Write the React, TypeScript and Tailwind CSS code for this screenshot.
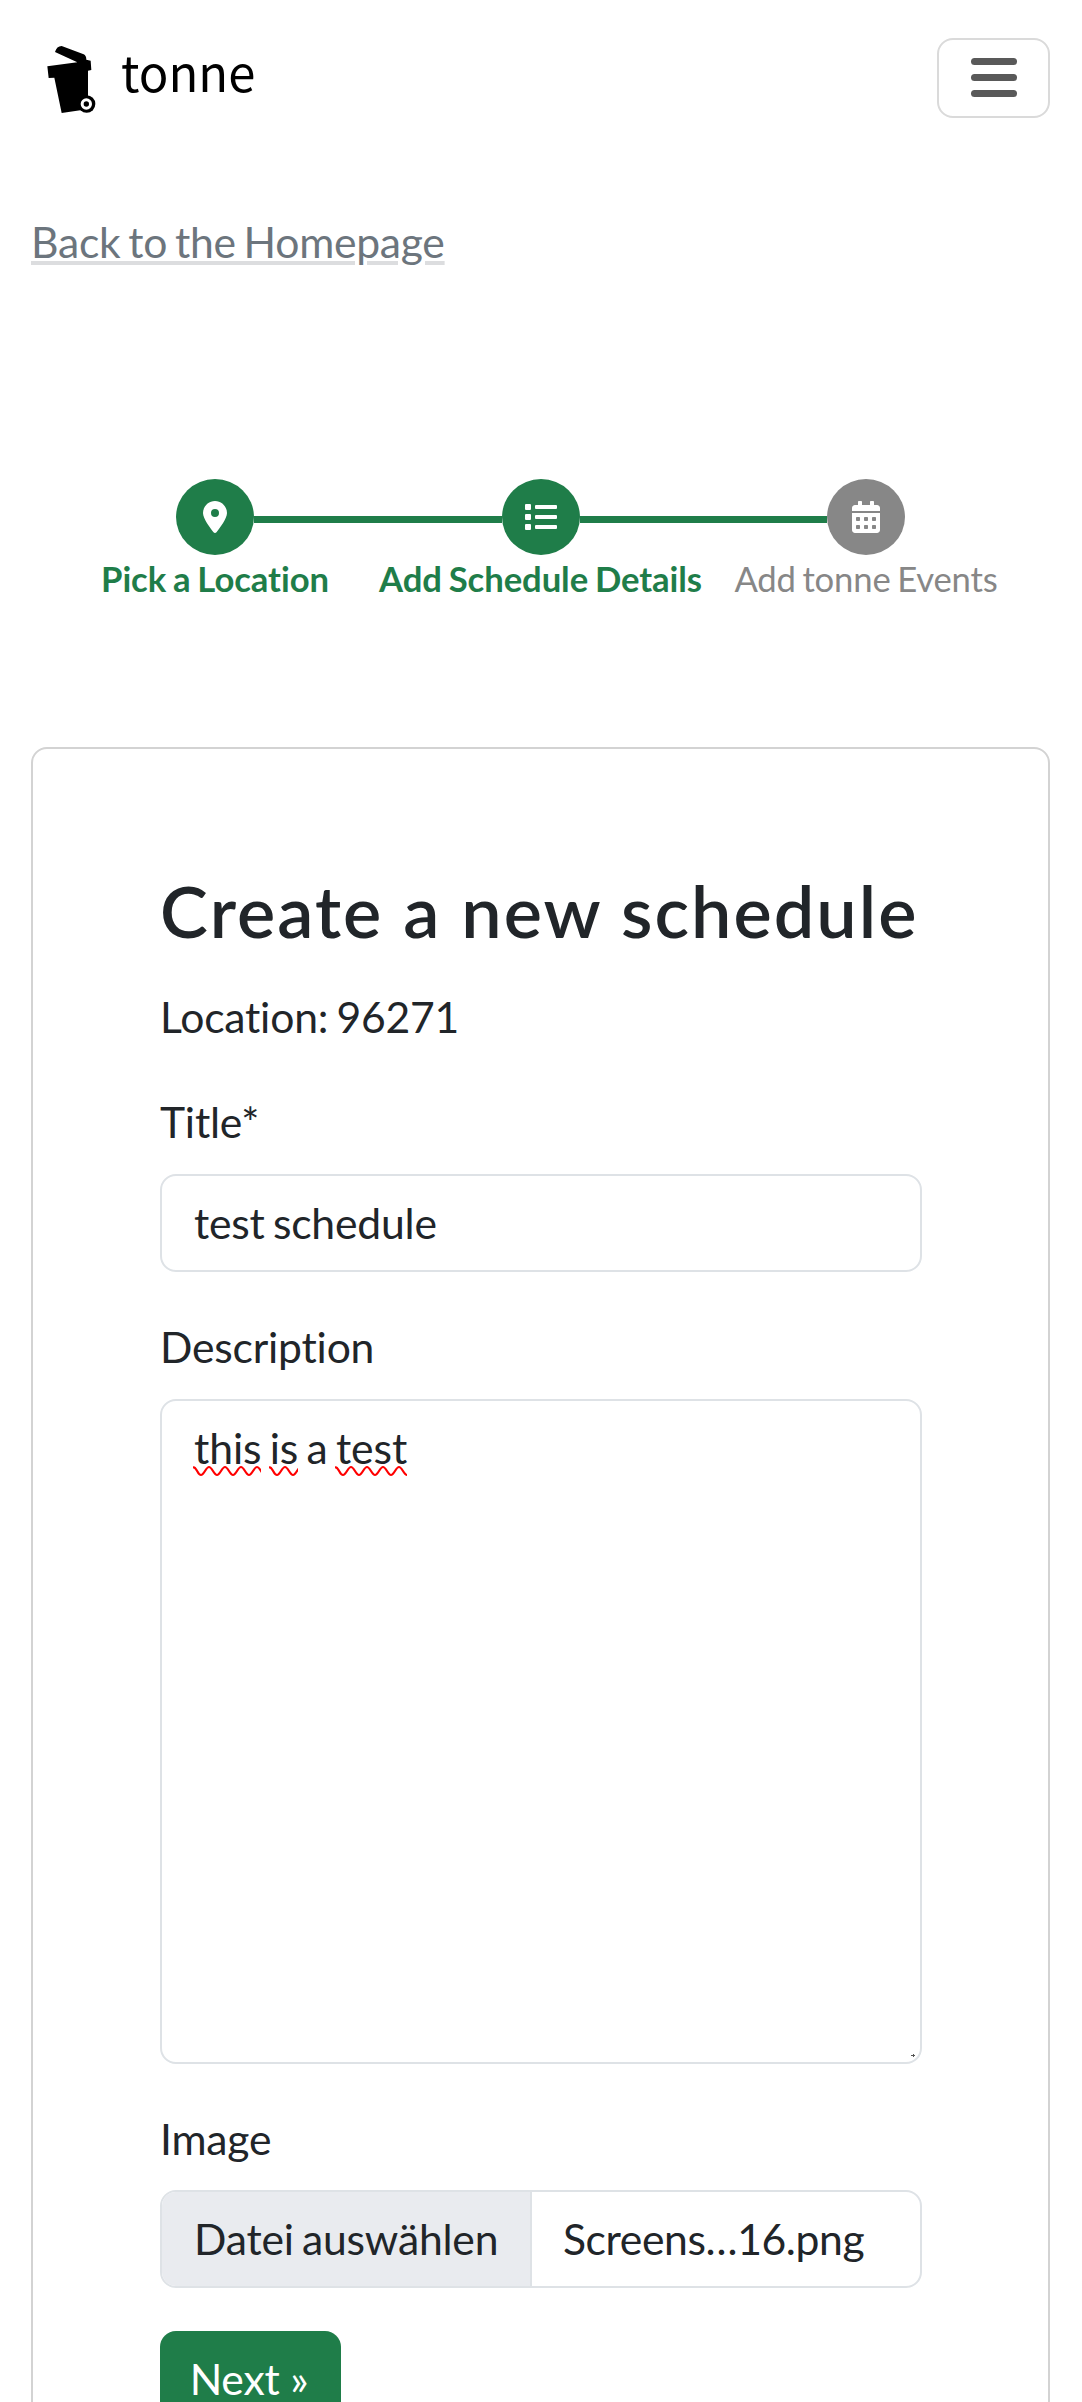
import { FaCalendarAlt, FaList } from "react-icons/fa";
import { FaLocationDot } from "react-icons/fa6";

function BinLogo() {
  return (
    <svg className="h-[69px] w-[51px]" viewBox="0 0 153 207" fill="#000">
      <path d="M27 21 Q32 3 47 3 L113 28 Q121 32 121 44 L134 47 L136 75 L126 77 L126 154 L108 195 L47 204 L25 98 L8 99 L4 64 L94 52 Z" />
      <circle cx="122" cy="177" r="26" />
      <circle cx="121" cy="177" r="12.5" fill="none" stroke="#fff" strokeWidth="9" />
    </svg>
  );
}

function Squiggle({ word, width }: { word: string; width: number }) {
  return (
    <span className="relative inline-block">
      {word}
      <svg
        className="absolute -left-px top-[49px] h-[14px] overflow-hidden"
        style={{ width }}
        fill="none"
        stroke="#f00"
        strokeWidth="2.2"
      >
        <path d="M0 2 L2 3 C5 6 5 10 8 10 C11 10 13 2 16 2 C19 2 21 10 24 10 C27 10 29 2 32 2 C35 2 37 10 40 10 C43 10 45 2 48 2 C51 2 53 10 56 10 C59 10 61 2 64 2 C67 2 69 10 72 10" />
      </svg>
    </span>
  );
}

type StepProps = {
  label: string;
  icon: React.ReactNode;
  first?: boolean;
  last?: boolean;
  muted?: boolean;
};

function Step({ label, icon, first, last, muted }: StepProps) {
  return (
    <li className="flex w-[325.5px] flex-col items-center">
      <div className="flex w-full items-center">
        <span className={first ? "h-[7px] flex-1" : "mt-[5px] h-[7px] flex-1 bg-[#1f7d49]"} />
        <span
          className={
            muted
              ? "flex h-[76px] w-[78px] items-center justify-center rounded-[50%] bg-[#878787] text-[32px] text-white"
              : "flex h-[76px] w-[78px] items-center justify-center rounded-[50%] bg-[#1f7d49] text-[32px] text-white"
          }
        >
          {icon}
        </span>
        <span className={last ? "h-[7px] flex-1" : "mt-[5px] h-[7px] flex-1 bg-[#1f7d49]"} />
      </div>
      <span
        className={
          muted
            ? "-mt-[2px] whitespace-nowrap text-[34.67px] leading-[52px] tracking-[-0.18px] [word-spacing:-2px] text-[#878787]"
            : "-mt-[2px] whitespace-nowrap text-[34.67px] font-bold leading-[52px] tracking-[-0.08px] [word-spacing:-1.5px] text-[#1f7d49]"
        }
      >
        {label}
      </span>
    </li>
  );
}

export default function App() {
  return (
    <div className="h-[2402px] overflow-hidden bg-white font-['Lato',sans-serif] text-[42.67px] leading-[64px] tracking-[-0.2px] text-[#212529] [font-variant-ligatures:none] [word-spacing:-2.5px]">
      <header className="flex h-[156px] items-start justify-between pl-[46px] pr-8 pt-[37px]">
        <div className="flex items-start pt-2">
          <BinLogo />
          <span className="ml-6 -mt-[4px] font-['Noto_Sans_CJK_SC',sans-serif] text-[49px] leading-[60px] tracking-normal text-black">
            tonne
          </span>
        </div>
        <button
          aria-label="Menu"
          className="mt-[0.5px] flex h-[80px] w-[113px] flex-col items-center justify-center gap-[9px] rounded-2xl border-2 border-[#dadada]"
        >
          <span className="h-[7px] w-[46px] rounded-full bg-[#595959]" />
          <span className="h-[7px] w-[46px] rounded-full bg-[#595959]" />
          <span className="h-[7px] w-[46px] rounded-full bg-[#595959]" />
        </button>
      </header>

      <main className="px-[31px]">
        <a className="mt-[54px] block w-fit tracking-[-0.27px] underline decoration-[#dcdddf] decoration-4 underline-offset-[3px] text-[#6c757d] [word-spacing:-2.8px]">
          Back to the Homepage
        </a>

        <ol className="mt-[205px] flex justify-center pr-px">
          <Step label="Pick a Location" icon={<FaLocationDot />} first />
          <Step label="Add Schedule Details" icon={<FaList />} />
          <Step label="Add tonne Events" icon={<FaCalendarAlt />} last muted />
        </ol>

        <section className="mt-[142px] h-[1800px] w-[1019px] rounded-2xl border-2 border-[#d3d3d3] px-[127px] pt-[113px]">
          <h1 className="h-[96px] whitespace-nowrap text-[72px] font-semibold leading-[96px] tracking-[2px] [word-spacing:0px]">
            Create a new schedule
          </h1>
          <p className="mt-[27px]">Location: 96271</p>

          <label className="mt-[41px] block">Title*</label>
          <div className="mt-5 h-[98px] w-[762px] rounded-2xl border-2 border-[#dee2e6] px-8 pt-[15px]">
            test schedule
          </div>

          <label className="mt-[43px] block">Description</label>
          <div className="relative mt-5 h-[665px] w-[762px] rounded-2xl border-2 border-[#dee2e6] px-8 pt-[15px] tracking-[-0.1px]">
            <Squiggle word="this" width={68} /> <Squiggle word="is" width={29} /> a{" "}
            <Squiggle word="test" width={72} />
            <svg className="absolute bottom-[3px] right-[3px] size-[6px]" fill="#555">
              <path d="M0 2h2V1h1v1h1v1H3v1H2V3H0z" />
            </svg>
          </div>

          <label className="mt-[43px] block">Image</label>
          <div className="mt-[19px] flex h-[98px] w-[762px] overflow-hidden rounded-2xl border-2 border-[#dee2e6]">
            <span className="w-[370px] border-r-2 border-[#dee2e6] bg-[#e9ebef] pl-8 pt-[15px]">
              Datei auswählen
            </span>
            <span className="pl-[31px] pt-[15px] tracking-[-0.4px]">Screens…16.png</span>
          </div>

          <button className="mt-[43px] h-[98px] w-[181px] rounded-2xl bg-[#1f7d49] pb-[3px] pr-[3px] text-white">
            Next »
          </button>
        </section>
      </main>
    </div>
  );
}
